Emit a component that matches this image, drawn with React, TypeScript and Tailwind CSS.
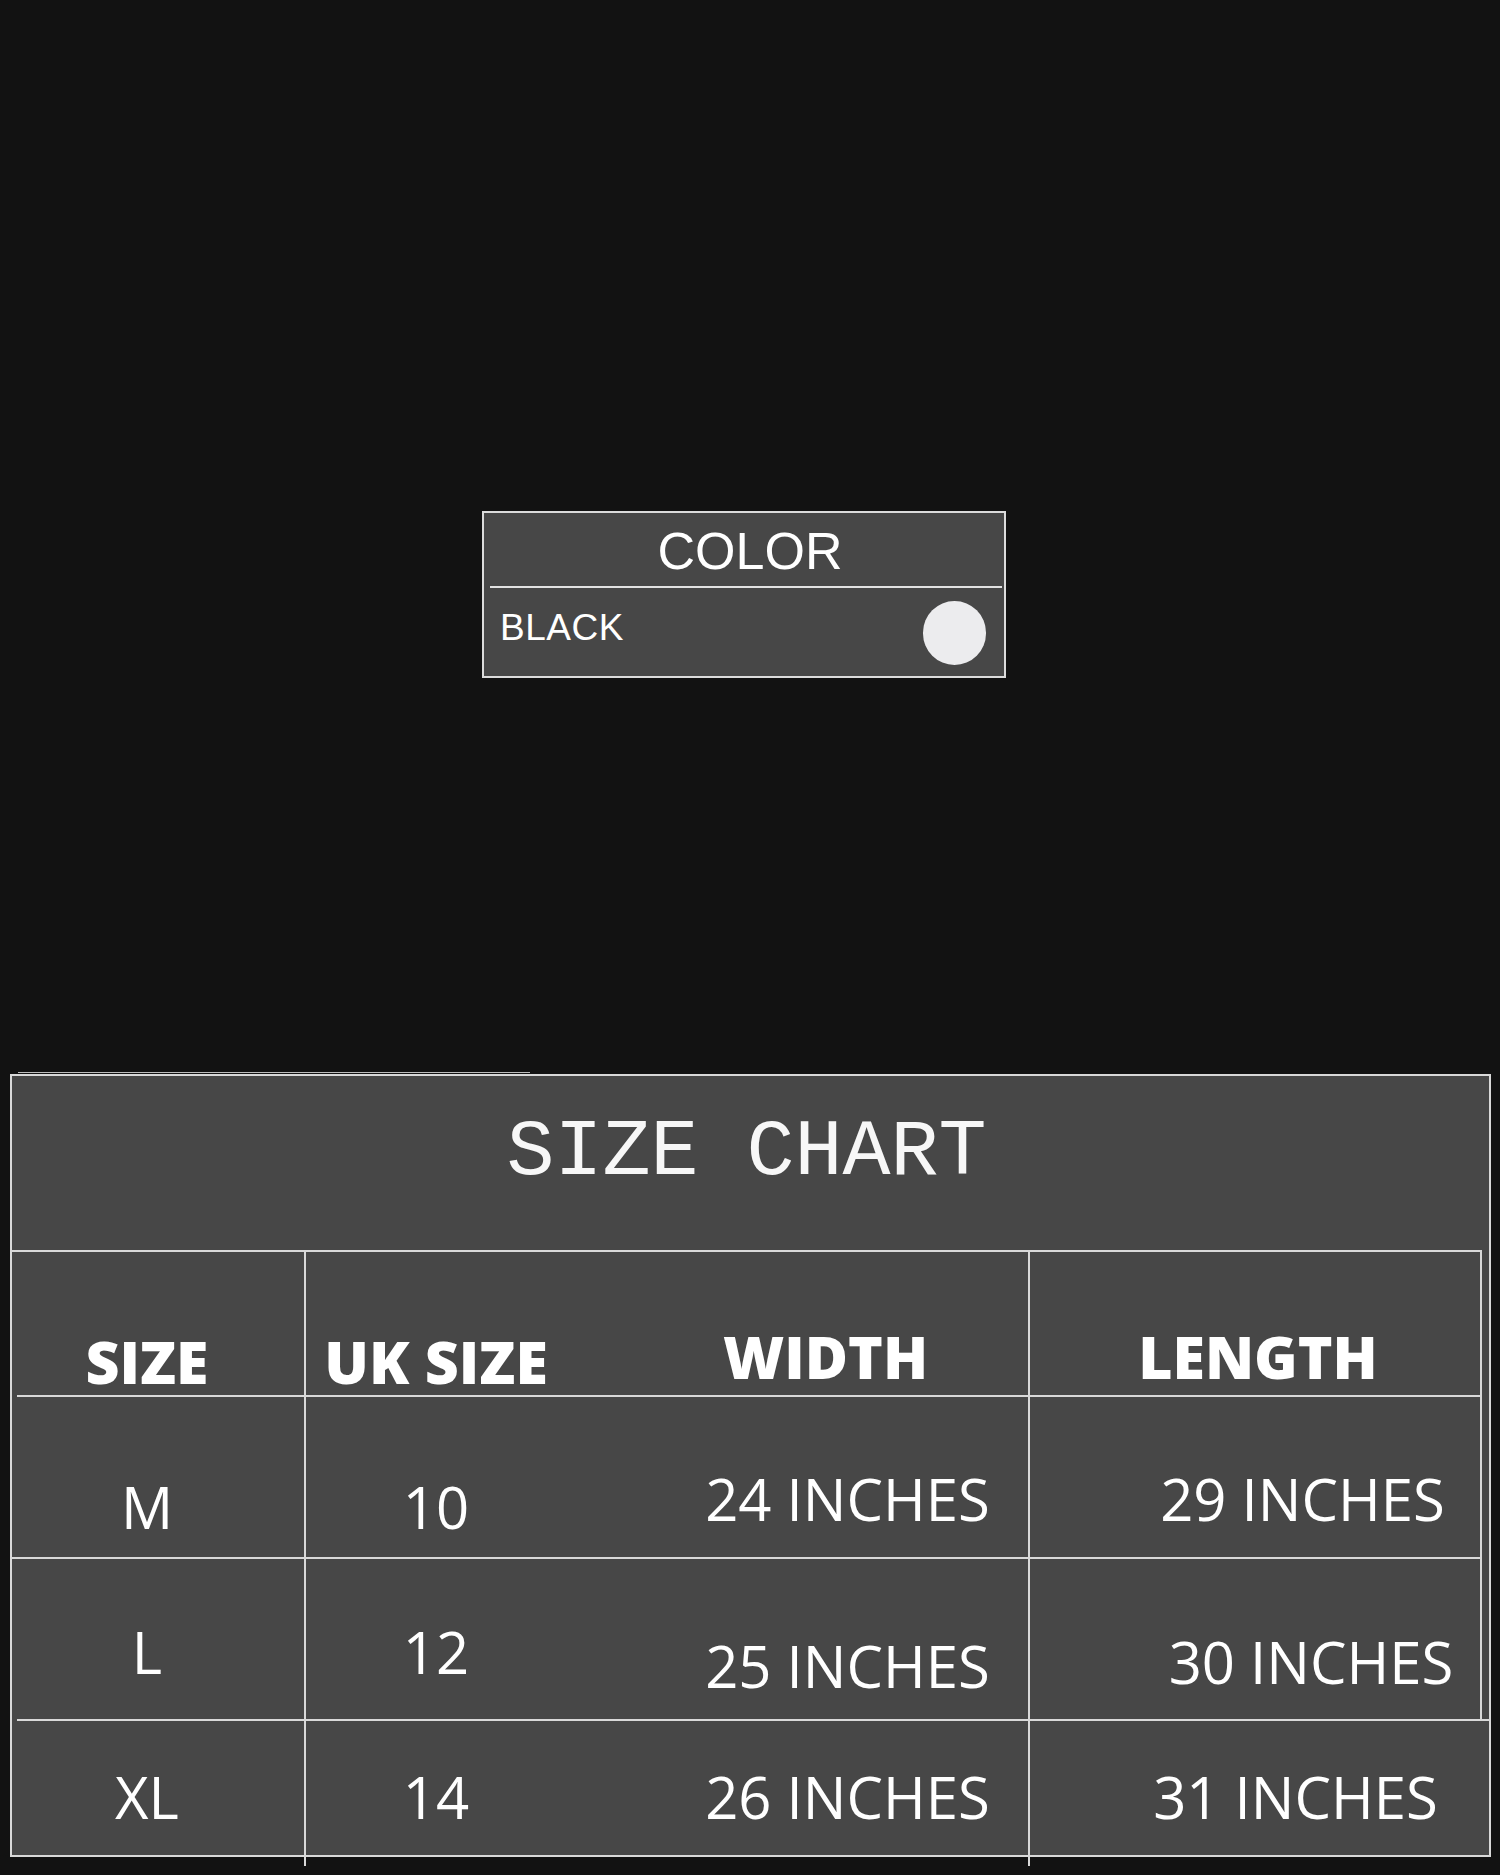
type Cell = { text: string; pt: number; shift?: number };

interface SizeRow {
  size: Cell;
  uk: Cell;
  width: Cell;
  length: Cell;
  height: string;
}

const rows: SizeRow[] = [
  {
    size: { text: "M", pt: 81 },
    uk: { text: "10", pt: 81 },
    width: { text: "24 INCHES", pt: 73 },
    length: { text: "29 INCHES", pt: 73, shift: 95 },
    height: "h-[160px]",
  },
  {
    size: { text: "L", pt: 64 },
    uk: { text: "12", pt: 64 },
    width: { text: "25 INCHES", pt: 78 },
    length: { text: "30 INCHES", pt: 74, shift: 112 },
    height: "h-[160px]",
  },
];

const lastRow: SizeRow = {
  size: { text: "XL", pt: 47 },
  uk: { text: "14", pt: 47 },
  width: { text: "26 INCHES", pt: 47 },
  length: { text: "31 INCHES", pt: 47, shift: 72 },
  height: "h-[134px]",
};

const mono = { fontFamily: '"Liberation Mono", monospace' };
const sans = { fontFamily: '"Liberation Sans", Arial, sans-serif' };
const open = { fontFamily: '"Open Sans", "Noto Sans", sans-serif' };

function Line({ inset = false }: { inset?: boolean }) {
  return <div className={`h-[2px] bg-[#d9d9d9] ${inset ? "ml-[5px]" : ""}`} />;
}

function ColorCard() {
  return (
    <div className="ml-[482px] w-[524px] h-[167px] border-2 border-[#dcdcdc] bg-[#474747] text-white">
      <div className="h-[73px] pt-[12px] pl-[12px] text-center text-[52px] leading-none" style={sans}>
        COLOR
      </div>
      <div className="h-[2px] ml-[6px] mr-[2px] bg-[#e2e2e2]" />
      <div className="flex items-start justify-between h-[88px]">
        <span className="mt-[21px] pl-[16px] text-[37px] leading-none tracking-[0.5px]" style={sans}>
          BLACK
        </span>
        <span className="mt-[13px] mr-[18px] w-[63px] h-[64px] rounded-full bg-[#ececee]" />
      </div>
    </div>
  );
}

function DataRow({ row, header = false }: { row: SizeRow; header?: boolean }) {
  const text = header
    ? "text-[59px] leading-none font-extrabold"
    : "text-[58px] leading-none font-normal";
  return (
    <div className={`flex ${row.height} text-white`} style={open}>
      <div className="w-[294px] border-r-2 border-[#d9d9d9] pr-[22px] text-center">
        <div className={text} style={{ paddingTop: row.size.pt }}>
          {row.size.text}
        </div>
      </div>
      <div className="flex w-[724px] border-r-2 border-[#d9d9d9]">
        <div className="w-[260px] text-center">
          <div className={`${text} whitespace-nowrap`} style={{ paddingTop: row.uk.pt }}>
            {row.uk.text}
          </div>
        </div>
        <div className="flex-1 text-center">
          <div
            className={`${text} whitespace-nowrap`}
            style={{ paddingTop: row.width.pt, paddingLeft: row.width.shift ?? 101 }}
          >
            {row.width.text}
          </div>
        </div>
      </div>
      <div className="flex-1 text-center">
        <div
          className={`${text} whitespace-nowrap`}
          style={{ paddingTop: row.length.pt, paddingLeft: row.length.shift ?? 0 }}
        >
          {row.length.text}
        </div>
      </div>
    </div>
  );
}

function SizeChart() {
  const headerRow: SizeRow = {
    size: { text: "SIZE", pt: 80 },
    uk: { text: "UK SIZE", pt: 80 },
    width: { text: "WIDTH", pt: 75, shift: 57 },
    length: { text: "LENGTH", pt: 75, shift: 6 },
    height: "h-[143px]",
  };

  return (
    <div>
      <div className="ml-[18px] w-[512px] h-px bg-[#bdbdbd]" />
      <div className="mt-px ml-[10px] w-[1481px] border-2 border-[#d9d9d9] bg-[#474747]">
        <div
          className="h-[174px] pt-[37px] pr-[8px] text-center text-[80px] leading-none text-[#f7f7f7]"
          style={mono}
        >
          SIZE CHART
        </div>
        <div className="mr-[7px] border-r-2 border-[#d9d9d9]">
          <Line />
          <DataRow row={headerRow} header />
          <Line inset />
          <DataRow row={rows[0]} />
          <Line />
          <DataRow row={rows[1]} />
        </div>
        <Line inset />
        <DataRow row={lastRow} />
      </div>
      <div className="flex h-[9px] pl-[304px]">
        <div className="w-[2px] bg-[#d9d9d9]" />
        <div className="w-[722px]" />
        <div className="w-[2px] bg-[#d9d9d9]" />
      </div>
    </div>
  );
}

export default function App() {
  return (
    <div className="w-[1500px] h-[1875px] overflow-hidden bg-[#121212] pt-[511px]">
      <ColorCard />
      <div className="h-[394px]" />
      <SizeChart />
    </div>
  );
}
